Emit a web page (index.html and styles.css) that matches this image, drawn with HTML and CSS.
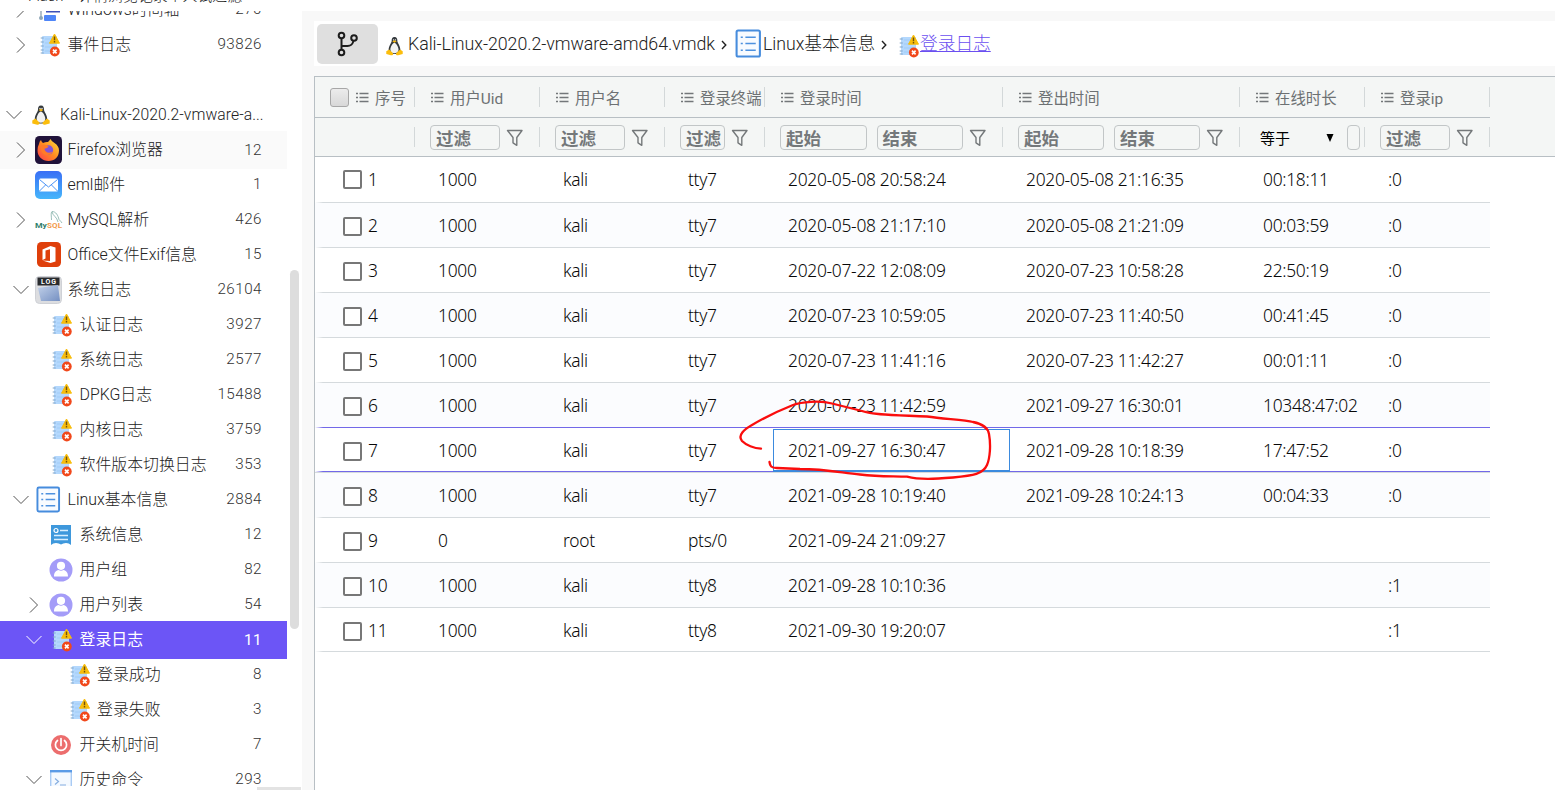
FILE: index.html
```html
<!DOCTYPE html>
<html lang="zh-CN">
<head>
<meta charset="utf-8">
<title>登录日志</title>
<link rel="stylesheet" href="styles.css">
</head>
<body>
<svg class="defs" width="0" height="0">
  <defs>
    <linearGradient id="mailg" x1="0" y1="0" x2="0" y2="1"><stop offset="0" stop-color="#3a6ff5"/><stop offset="1" stop-color="#46b6fb"/></linearGradient>
    <linearGradient id="foxg" x1="0" y1="1" x2="1" y2="0"><stop offset="0" stop-color="#ff3a4e"/><stop offset=".5" stop-color="#ff8a22"/><stop offset="1" stop-color="#ffe23a"/></linearGradient>
    <linearGradient id="logg" x1="0" y1="0" x2="1" y2="1"><stop offset="0" stop-color="#c3d2ea"/><stop offset="1" stop-color="#7590c2"/></linearGradient>
    <symbol id="right" viewBox="0 0 10 18"><path d="M1 1.500l7.500 7.500-7.500 7.500" fill="none" stroke="currentColor"/></symbol>
    <symbol id="down" viewBox="0 0 16 10"><path d="M.5 1l7.500 7.500 7.500-7.500" fill="none" stroke="currentColor"/></symbol>
    <symbol id="log" viewBox="0 0 20 24">
      <rect x="2" y="3" width="15" height="18" rx="1" fill="#b4d8fd"/>
      <path d="M5 6h9M5 10h11M5 14h8M5 18h8" stroke="#9fccf8" stroke-width="1.200"/>
      <path d="M.7 5h3M.7 9h3M.7 13h3M.7 17h3M.7 20h3" stroke="#7fa3c8" stroke-width="1.200"/>
      <path d="M14.500 1l5 9.200h-10z" fill="#f8bd0b" stroke="#f8bd0b" stroke-linejoin="round"/>
      <path d="M14.500 3.500v3.700M14.500 8v1.500" stroke="#71500a" stroke-width="1.400"/>
      <circle cx="14.800" cy="18.500" r="4.900" fill="#f1481b"/>
      <path d="M13 16.700l3.600 3.600m0-3.600l-3.600 3.600" stroke="#fff" stroke-width="1.700"/>
    </symbol>
    <symbol id="tux" viewBox="0 0 18 20">
      <path d="M9 .5c-2.500 0-3 1.900-3 3.900C6 7 2.800 9.500 2.800 14c0 3 2.400 4.500 6.200 4.500s6.200-1.500 6.200-4.500C15.200 9.500 12 7 12 4.400 12 2.400 11.500.5 9 .5z" fill="#34393d"/>
      <path d="M8.800 6.500c-1.600 0-4.200 4.500-4.200 7.200 0 2.500 1.500 4 4.200 4s4.500-1.500 4.500-4c0-2.700-2.700-7.200-4.500-7.200z" fill="#f2f2f2"/>
      <path d="M6.600 5l2.400-1.200L11.300 5 9 6.600z" fill="#f8b80c"/>
      <circle cx="8" cy="3.500" r=".7" fill="#fff"/><circle cx="10" cy="3.500" r=".7" fill="#fff"/>
      <path d="M.3 15.600l3.100-2 4 4c.8 1.400-.6 2.400-2.200 2.100L.3 18.600zM17.700 15.600l-2.800-2-4.200 4c-.8 1.400.6 2.400 2.200 2.100l4.800-1.100z" fill="#fbbd0c"/>
    </symbol>
    <symbol id="list" viewBox="0 0 26 28">
      <rect x="1.500" y="1.500" width="22.500" height="25" rx="1.500" fill="#f8fbff" stroke="#468cdd" stroke-width="2"/>
      <path d="M5.500 8h2M5.500 14h2M5.500 20.500h2M10 8h10M10 14h10M10 20.500h10" stroke="#4d91df" stroke-width="1.500"/>
    </symbol>
    <symbol id="user" viewBox="0 0 24 24">
      <circle cx="12" cy="12" r="11.500" fill="#a49cf8"/><circle cx="12" cy="7.800" r="4.100" fill="#fff"/>
      <path d="M5 18.500c0-4 2-6 4.500-6.500q2.500 1.500 5 0c2.500.5 4.500 2.500 4.500 6.500z" fill="#fff"/>
    </symbol>
    <symbol id="menu" viewBox="0 0 13 11"><path d="M0 1.500h2M0 5.500h2M0 9.500h2M3.500 1.500h9M3.500 5.500h9M3.500 9.500h9" stroke="#73777a" stroke-width="1.300"/></symbol>
    <symbol id="funnel" viewBox="0 0 18 18"><path d="M1.500 1.500h14.500l-5.200 7v7.800l-3.800-2.500V8.500z" fill="none" stroke="#74787a" stroke-width="1.400" stroke-linejoin="round"/></symbol>
  </defs>
</svg>

<div class="app">
  <aside class="side">
    <div class="cut">Flash　详情浏览记录个人试过滤</div>
    <div class="body">
      <div class="tree">
        <div class="node l1"><svg class="tw right"><use href="#right"/></svg><span class="ic"><svg width="22" height="24" viewBox="0 0 22 24"><path d="M3 3v17" stroke="#9aabba" stroke-width="1.500"/><circle cx="3" cy="20" r="2" fill="#8ea6b7"/><rect x="8" y="9" width="14" height="5.500" fill="#3c50b8"/><rect x="6" y="17" width="12" height="6" rx="1" fill="#4f86f8"/></svg></span><span class="nm">Windows时间轴</span><span class="ct">270</span></div>
        <div class="node l1"><svg class="tw right"><use href="#right"/></svg><span class="ic"><svg class="lg" width="20" height="24"><use href="#log"/></svg></span><span class="nm">事件日志</span><span class="ct">93826</span></div>
        <div class="node"></div>
        <div class="node l0"><svg class="tw down"><use href="#down"/></svg><span class="ic"><svg width="18" height="20"><use href="#tux"/></svg></span><span class="nm kali">Kali-Linux-2020.2-vmware-a...</span></div>
        <div class="node l1 hover"><svg class="tw right"><use href="#right"/></svg><span class="ic"><svg width="27" height="28" viewBox="0 0 27 28"><rect width="27" height="28" rx="4.500" fill="#20123a"/><path d="M4 8q.5-3 2-4 .5 2 2 3 3-1.500 5-1 1.500-1.500 2.500-3 1 2.500 4 4Q24 10 24 14.500C24 21 19.500 25 13.500 25S2.500 20.500 2.500 14.500Q2.500 10.500 4 8z" fill="url(#foxg)"/><circle cx="13.500" cy="14" r="4.700" fill="#8054d8"/><path d="M6 9.500c3-1.500 5-.5 7.500 1-1 1.500-2.500 2-4 2 0 4 5 5.500 8 3-2 5.500-11 4.500-11.500-2z" fill="#ff7b28"/></svg></span><span class="nm">Firefox浏览器</span><span class="ct">12</span></div>
        <div class="node l1"><span class="tw"></span><span class="ic"><svg width="27" height="28" viewBox="0 0 27 28"><rect width="27" height="28" rx="5" fill="url(#mailg)"/><rect x="4" y="7.500" width="19" height="13" rx="1.500" fill="#fff"/><path d="M4.500 8.500l9 7.500 9-7.500M4.500 20l6-6M22.500 20l-6-6" fill="none" stroke="#4a92f6"/></svg></span><span class="nm">eml邮件</span><span class="ct">1</span></div>
        <div class="node l1"><svg class="tw right"><use href="#right"/></svg><span class="ic"><svg class="mysql" width="28" height="28" viewBox="0 0 28 28"><text x="0" y="22" textLength="12" lengthAdjust="spacingAndGlyphs" fill="#33806f">My</text><text x="12" y="22" textLength="15" fill="#f29a4b">SQL</text><path d="M16.500 14c0-4-1-7 .5-8.500 4 0 6 4 7 8 1 1.500 2.500 2 3 3.500M17 6c1 4 5 5 6 10" fill="none" stroke="#8fb8b1" stroke-width=".9"/></svg></span><span class="nm">MySQL解析</span><span class="ct">426</span></div>
        <div class="node l1"><span class="tw"></span><span class="ic"><svg width="24" height="25" viewBox="0 0 24 25"><rect width="24" height="25" rx="4.500" fill="#df3f0b"/><path d="M5.500 7.500l8-3.500 5 1.500v14L13.500 21l-8-2.500 7.500.5V7.200L8.500 8.500v8l-3 1.500z" fill="#fff"/></svg></span><span class="nm">Office文件Exif信息</span><span class="ct">15</span></div>
        <div class="node l1"><svg class="tw down"><use href="#down"/></svg><span class="ic"><svg class="logpic" width="27" height="28" viewBox="0 0 27 28"><rect x=".5" y=".5" width="26" height="27" rx="4" fill="#dcdde0" stroke="#cfd1d6"/><rect x="2.500" y="1.500" width="22" height="8" fill="#292b2e"/><text x="6" y="8" fill="#fff" textLength="15">LOG</text><path d="M3 12l20-3 2 16H6z" fill="url(#logg)"/></svg></span><span class="nm">系统日志</span><span class="ct">26104</span></div>
        <div class="node l2"><span class="tw"></span><span class="ic"><svg class="lg" width="20" height="24"><use href="#log"/></svg></span><span class="nm">认证日志</span><span class="ct">3927</span></div>
        <div class="node l2"><span class="tw"></span><span class="ic"><svg class="lg" width="20" height="24"><use href="#log"/></svg></span><span class="nm">系统日志</span><span class="ct">2577</span></div>
        <div class="node l2"><span class="tw"></span><span class="ic"><svg class="lg" width="20" height="24"><use href="#log"/></svg></span><span class="nm">DPKG日志</span><span class="ct">15488</span></div>
        <div class="node l2"><span class="tw"></span><span class="ic"><svg class="lg" width="20" height="24"><use href="#log"/></svg></span><span class="nm">内核日志</span><span class="ct">3759</span></div>
        <div class="node l2"><span class="tw"></span><span class="ic"><svg class="lg" width="20" height="24"><use href="#log"/></svg></span><span class="nm">软件版本切换日志</span><span class="ct">353</span></div>
        <div class="node l1"><svg class="tw down"><use href="#down"/></svg><span class="ic"><svg width="25" height="27"><use href="#list"/></svg></span><span class="nm">Linux基本信息</span><span class="ct">2884</span></div>
        <div class="node l2"><span class="tw"></span><span class="ic"><svg width="20" height="20" viewBox="0 0 20 20"><path d="M0 0h20v20q-2-2-5-2t-5 1.500Q8 18 5 18t-5 2z" fill="#3e98dc"/><circle cx="5" cy="5.500" r="2" fill="none" stroke="#fff" stroke-width="1.200"/><path d="M9 5.500h8M3 10.500h14M3 14.500h14" stroke="#d9efff" stroke-width="1.300"/></svg></span><span class="nm">系统信息</span><span class="ct">12</span></div>
        <div class="node l2"><span class="tw"></span><span class="ic"><svg width="24" height="24"><use href="#user"/></svg></span><span class="nm">用户组</span><span class="ct">82</span></div>
        <div class="node l2"><svg class="tw right"><use href="#right"/></svg><span class="ic"><svg width="24" height="24"><use href="#user"/></svg></span><span class="nm">用户列表</span><span class="ct">54</span></div>
        <div class="node l2 sel"><svg class="tw down"><use href="#down"/></svg><span class="ic"><svg class="lg" width="20" height="24"><use href="#log"/></svg></span><span class="nm">登录日志</span><span class="ct">11</span></div>
        <div class="node l3"><span class="tw"></span><span class="ic"><svg class="lg" width="20" height="24"><use href="#log"/></svg></span><span class="nm">登录成功</span><span class="ct">8</span></div>
        <div class="node l3"><span class="tw"></span><span class="ic"><svg class="lg" width="20" height="24"><use href="#log"/></svg></span><span class="nm">登录失败</span><span class="ct">3</span></div>
        <div class="node l2"><span class="tw"></span><span class="ic"><svg width="20" height="20" viewBox="0 0 20 20"><circle cx="10" cy="10" r="10" fill="#ec6d6d"/><path d="M6.500 5.500a5.600 5.600 0 1 0 7 0M10 3.500v7" fill="none" stroke="#fff" stroke-width="1.700" stroke-linecap="round"/></svg></span><span class="nm">开关机时间</span><span class="ct">7</span></div>
        <div class="node l2"><svg class="tw down"><use href="#down"/></svg><span class="ic"><svg width="22" height="20" viewBox="0 0 22 20"><rect x=".7" y=".7" width="20.600" height="18.600" fill="#f4f9ff" stroke="#a9cbf4" stroke-width="1.400"/><path d="M0 1.200h22" stroke="#5b9be6" stroke-width="2.400"/><path d="M5 8.500l3.500 3-3.500 3M10 15h6" fill="none" stroke="#86aee0" stroke-width="1.200"/></svg></span><span class="nm">历史命令</span><span class="ct">293</span></div>
      </div>
      <div class="track"><div class="thumb"></div></div>
    </div>
    <div class="hbar"></div>
  </aside>

  <main class="main">
    <nav class="crumbs">
      <button class="branch"><svg width="22" height="26" viewBox="0 0 22 26"><g fill="none" stroke="#1c1c1c" stroke-width="2"><circle cx="4.500" cy="4.500" r="2.800"/><circle cx="17" cy="7" r="2.800"/><circle cx="4.500" cy="21.500" r="2.800"/><path d="M4.500 7.500v11M4.500 15h6c4 0 5-2 6-5"/></g></svg></button>
      <svg class="ctux" width="17" height="20"><use href="#tux"/></svg>
      <span class="c1">Kali-Linux-2020.2-vmware-amd64.vmdk</span>
      <svg class="sep" viewBox="0 0 6 10"><path d="M1 1l3.800 4L1 9" fill="none" stroke="#222" stroke-width="1.400"/></svg>
      <svg class="clist" width="27" height="29"><use href="#list"/></svg>
      <span class="c2">Linux基本信息</span>
      <svg class="sep s2" viewBox="0 0 6 10"><path d="M1 1l3.800 4L1 9" fill="none" stroke="#222" stroke-width="1.400"/></svg>
      <svg class="clog" width="20" height="24"><use href="#log"/></svg>
      <a class="c3">登录日志</a>
    </nav>

    <section class="grid">
      <div class="hwrap">
        <div class="row head">
          <div class="h first"><span class="allbox"></span><svg class="m"><use href="#menu"/></svg>序号</div>
          <div class="h"><svg class="m"><use href="#menu"/></svg>用户Uid</div>
          <div class="h"><svg class="m"><use href="#menu"/></svg>用户名</div>
          <div class="h"><svg class="m"><use href="#menu"/></svg>登录终端</div>
          <div class="h"><svg class="m"><use href="#menu"/></svg>登录时间</div>
          <div class="h"><svg class="m"><use href="#menu"/></svg>登出时间</div>
          <div class="h"><svg class="m"><use href="#menu"/></svg>在线时长</div>
          <div class="h"><svg class="m"><use href="#menu"/></svg>登录ip</div>
        </div>
        <div class="row filters">
          <div class="f"></div>
          <div class="f"><span class="inp">过滤</span><svg class="fn"><use href="#funnel"/></svg></div>
          <div class="f"><span class="inp">过滤</span><svg class="fn"><use href="#funnel"/></svg></div>
          <div class="f"><span class="inp">过滤</span><svg class="fn"><use href="#funnel"/></svg></div>
          <div class="f two"><span class="inp">起始</span><span class="inp">结束</span><svg class="fn"><use href="#funnel"/></svg></div>
          <div class="f two"><span class="inp">起始</span><span class="inp">结束</span><svg class="fn"><use href="#funnel"/></svg></div>
          <div class="f eq"><span class="op">等于</span><svg class="tri" viewBox="0 0 8 8"><path d="M.5 0h7L4 8z"/></svg><span class="mini"></span></div>
          <div class="f"><span class="inp">过滤</span><svg class="fn"><use href="#funnel"/></svg></div>
        </div>
      </div>
      <div class="rows">
        <div class="row rec"><div class="n"><i></i>1</div><div>1000</div><div>kali</div><div>tty7</div><div>2020-05-08 20:58:24</div><div>2020-05-08 21:16:35</div><div>00:18:11</div><div>:0</div></div>
        <div class="row rec"><div class="n"><i></i>2</div><div>1000</div><div>kali</div><div>tty7</div><div>2020-05-08 21:17:10</div><div>2020-05-08 21:21:09</div><div>00:03:59</div><div>:0</div></div>
        <div class="row rec"><div class="n"><i></i>3</div><div>1000</div><div>kali</div><div>tty7</div><div>2020-07-22 12:08:09</div><div>2020-07-23 10:58:28</div><div>22:50:19</div><div>:0</div></div>
        <div class="row rec"><div class="n"><i></i>4</div><div>1000</div><div>kali</div><div>tty7</div><div>2020-07-23 10:59:05</div><div>2020-07-23 11:40:50</div><div>00:41:45</div><div>:0</div></div>
        <div class="row rec"><div class="n"><i></i>5</div><div>1000</div><div>kali</div><div>tty7</div><div>2020-07-23 11:41:16</div><div>2020-07-23 11:42:27</div><div>00:01:11</div><div>:0</div></div>
        <div class="row rec pre"><div class="n"><i></i>6</div><div>1000</div><div>kali</div><div>tty7</div><div>2020-07-23 11:42:59</div><div>2021-09-27 16:30:01</div><div>10348:47:02</div><div>:0</div></div>
        <div class="row rec cur"><div class="n"><i></i>7</div><div>1000</div><div>kali</div><div>tty7</div><div class="cell">2021-09-27 16:30:47</div><div>2021-09-28 10:18:39</div><div>17:47:52</div><div>:0</div></div>
        <div class="row rec"><div class="n"><i></i>8</div><div>1000</div><div>kali</div><div>tty7</div><div>2021-09-28 10:19:40</div><div>2021-09-28 10:24:13</div><div>00:04:33</div><div>:0</div></div>
        <div class="row rec"><div class="n"><i></i>9</div><div>0</div><div>root</div><div>pts/0</div><div>2021-09-24 21:09:27</div><div></div><div></div><div></div></div>
        <div class="row rec"><div class="n"><i></i>10</div><div>1000</div><div>kali</div><div>tty8</div><div>2021-09-28 10:10:36</div><div></div><div></div><div>:1</div></div>
        <div class="row rec"><div class="n"><i></i>11</div><div>1000</div><div>kali</div><div>tty8</div><div>2021-09-30 19:20:07</div><div></div><div></div><div>:1</div></div>
      </div>
    </section>
  </main>
</div>
<svg class="mark" viewBox="730 395 270 90" width="270" height="90"><path d="M761 448.700C754 448.500 746 445 742 441 737 435 745 429 752 425 762 419 783 409 793 405 801 402 820 400 832 403.500L862 411C873 415 895 415 927 416.500 945 419 965 420 973 422 983 424 988 428 989 434 991 445 990 458 987 465 983 474 974 475.500 953 477.500 935 479 920 480 907 476.700 893 476 880 477 860 474.500 840 472.500 825 469 800 469L777 468C771 468 770 466 769.500 462"/></svg>
</body>
</html>
```
FILE: styles.css
```css
* { box-sizing: border-box; }
body { margin: 0; width: 1555px; height: 790px; overflow: hidden; background: #fff; font-family: Roboto, "Noto Sans CJK SC", sans-serif; }
.defs { position: absolute; }
svg { display: block; flex: none; }
.app { display: flex; height: 790px; }

.side { width: 302px; display: flex; flex-direction: column; }
.cut { height: 11px; overflow: hidden; padding-left: 28px; font-size: 14.9px; font-weight: 300; line-height: 16px; color: #222; white-space: nowrap; }
.cut::before { content: ""; display: block; margin-top: -12px; }
.body { height: 775px; display: flex; overflow: hidden; }
.tree { width: 287px; margin-top: -19px; flex: none; }
.node { height: 35px; display: flex; align-items: center; color: #222; font-size: 15.9px; font-weight: 300; white-space: nowrap; }
.tw { flex: none; width: 16px; height: 18px; color: #555; margin-right: 6px; }
.tw.right { width: 10px; margin-left: 3px; margin-right: 9px; }
.tw.down { height: 10px; }
.l0 { padding-left: 6px; }
.l1 { padding-left: 13px; }
.l2 { padding-left: 26px; }
.l3 { padding-left: 44px; }
.ic { flex: none; width: 27px; display: flex; justify-content: center; margin-right: 5.5px; }
.lg { margin: 0 -1px 0 1px; }
.l0 .tw { margin-right: 5px; }
.l0 .ic { margin-right: 6px; }
.l2 .tw, .l3 .tw { margin-right: 5px; }
.l2 .tw.right { margin-left: 3px; margin-right: 8px; }
.l2 .ic { margin-right: 5.5px; }
.l3 .ic { width: 27px; margin-right: 5px; }
.nm { flex: 1; line-height: 24px; }
.kali { font-size: 15.7px; letter-spacing: .06px; }
.ct { margin: -1px 25px 0 0; font-size: 15.2px; font-weight: 360; letter-spacing: .5px; color: #333; }
.hover { background: #fafafa; height: 38px; margin: -1px 0 -2px; }
.sel { height: 38px; margin: -1px 0 -2px; background: #6c55f6; color: #fff; font-weight: 400; }
.sel .ct, .sel .tw { color: #fff; }
.sel .ct { font-weight: 400; }
.mysql text { font: bold 8px Roboto, sans-serif; }
.logpic text { font: bold 7px Roboto, sans-serif; }
.track { width: 15px; padding: 259px 0 0 3px; }
.thumb { width: 9px; height: 359px; border-radius: 5px; background: #ddd; }
.hbar { width: 44px; height: 3px; margin: 1px 0 0 257px; background: #e3e3e3; }

.main { width: 1253px; height: 779px; margin-top: 11px; padding: 10px 0 0 12px; background: #f8f8f8; }
.crumbs { height: 45px; display: flex; align-items: center; background: #fff; padding-left: 3px; font-size: 17.8px; font-weight: 300; color: #222; white-space: nowrap; }
.branch { width: 61px; height: 40px; padding: 0; border: 0; border-radius: 5px; background: #dfdfdf; display: flex; align-items: center; justify-content: center; }
.ctux { margin: 4px 5px 0 8px; }
.c1 { width: 312px; font-weight: 350; letter-spacing: -.05px; }
.sep { width: 6px; height: 10px; margin: 3px 8px 0 1px; }
.clist { margin-right: 1px; }
.c2 { width: 112px; margin-top: -3px; font-size: 17.7px; }
.s2 { margin: 3px 11px 0 6px; }
.clog { margin: 4px 0 0 1px; }
.c3 { margin: -3px 0 0 1px; font-size: 17.7px; color: #6b4ff0; text-decoration: underline; }

.grid { margin-top: 10px; height: 714px; border-left: 1px solid #b8bfc4; border-top: 1px solid #b8bfc4; background: #fff; }
.hwrap { height: 80px; background: #f4f6f5; border-bottom: 1px solid #b8bfc4; }
.row { display: grid; width: 1175px; grid-template-columns: 100px 125px 125px 100px 238px 237px 125px 125px; }
.head { height: 41px; border-bottom: 1px solid #b8bfc4; }
.h, .f { display: flex; align-items: center; border-right: 1px solid #d3d8d9; height: 20px; align-self: center; white-space: nowrap; }
.h { padding-left: 16px; font-size: 15.4px; color: #6d7173; }
.first { padding-left: 15px; }
.m { width: 13px; height: 11px; margin-right: 6px; margin-top: 1px; }
.allbox { width: 19px; height: 19px; margin-right: 7px; flex: none; border: 1px solid #a7a7a7; border-radius: 3px; background: linear-gradient(#ececec, #d8d8d8); }
.filters { height: 38px; }
.f { padding-left: 15px; }
.inp { flex: 1; height: 25px; padding-left: 5px; border: 1px solid #c2c6c7; border-radius: 4px; font-size: 17.5px; line-height: 26px; font-weight: 700; color: #74787a; }
.fn { width: 18px; height: 18px; margin: 1px 15px 0 6px; }
.two { gap: 10px; }
.two .fn { margin-left: -4px; margin-right: 15px; }
.eq { padding-left: 20px; }
.op { width: 66px; font-size: 15px; color: #000; }
.tri { width: 8px; height: 8px; margin: 2px 13px 0 0; }
.mini { width: 13px; height: 25px; border: 1px solid #c2c6c7; border-radius: 4px; }

.rec { height: 45px; padding-bottom: 2px; align-items: center; color: #080808; font: 300 17.4px "Noto Sans", "Open Sans", sans-serif; letter-spacing: -.3px; background: linear-gradient(90deg, #fff, #d5dadd 8px) bottom / 100% 1px no-repeat, #fff; }
.rec:first-child { height: 46px; }
.rec:nth-child(even) { background-color: #fbfcfe; }
.rec:last-child { height: 44px; padding-bottom: 0; }
.rec > div { padding-left: 23px; white-space: nowrap; }
.rec > div.n { display: flex; align-items: center; padding-left: 28px; }
.rec i { width: 19px; height: 19px; margin: 3px 6px 0 0; border: 2px solid #777; border-radius: 2px; background: #fff; }
.rec:first-child i { margin-top: 1px; }
.rec:last-child i { margin-top: 2px; }
.pre { background-image: linear-gradient(90deg, #fff, #7268e8 8px); }
.cur { padding-bottom: 0; background-image: linear-gradient(90deg, #fff, #7268e8 8px), linear-gradient(#d5dadd, #d5dadd); background-position: 0 43px, 0 44px; background-size: 100% 1px; background-repeat: no-repeat; }
.cur > div:not(.cell) { padding-bottom: 2px; }
.cur .cell { height: 43px; margin: 0 -7px 0 8px; padding-left: 14px; border: 1px solid #3b8ade; border-bottom-width: 2px; display: flex; align-items: center; }
.mark { position: absolute; left: 730px; top: 395px; }
.mark path { fill: none; stroke: #fa0d0d; stroke-width: 2.3; stroke-linecap: round; stroke-linejoin: round; }
```
